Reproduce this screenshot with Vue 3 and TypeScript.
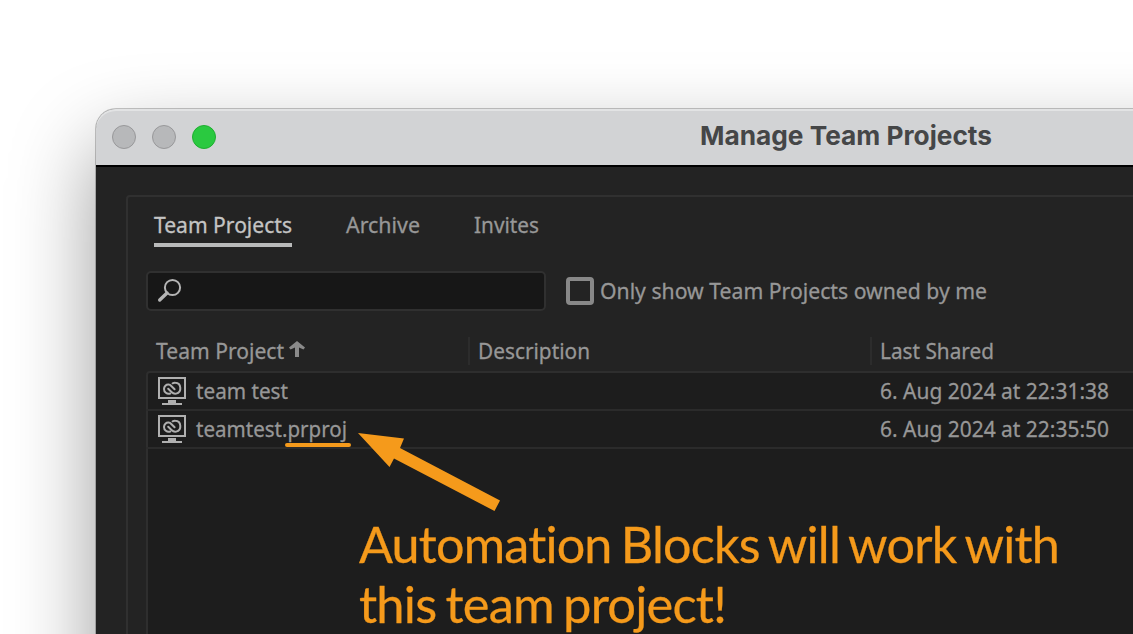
<script setup lang="ts">
import type { Directive } from 'vue'

interface Project {
  stem: string
  suffix: string
  width: number
  shared: string
}

const tabs = [
  { label: 'Team Projects', width: 138, active: true },
  { label: 'Archive', width: 74, active: false },
  { label: 'Invites', width: 65, active: false },
]

const projects: Project[] = [
  { stem: 'team test', suffix: '', width: 92, shared: '6. Aug 2024 at 22:31:38' },
  { stem: 'teamtest', suffix: '.prproj', width: 151, shared: '6. Aug 2024 at 22:35:50' },
]

// Condenses a label horizontally so that it fills the given width.
const vFit: Directive<HTMLElement, number> = {
  mounted(el, binding) {
    el.style.width = 'max-content'
    const natural = el.getBoundingClientRect().width
    el.style.transform = `scaleX(${binding.value / natural})`
    el.style.width = `${natural}px`
    el.style.marginRight = `${binding.value - natural}px`
  },
}
</script>

<template>
  <main class="stage">
    <section class="window">
      <header class="titlebar">
        <i class="light"></i><i class="light"></i><i class="light green"></i>
        <h1 v-fit="292" class="fit">Manage Team Projects</h1>
      </header>
      <div class="body">
        <div class="panel">
          <nav class="tabs">
            <a v-for="t in tabs" :key="t.label" class="tab" :class="{ active: t.active }">
              <span v-fit="t.width" class="fit">{{ t.label }}</span>
            </a>
          </nav>
          <div class="filters">
            <div class="search">
              <svg width="26" height="26" viewBox="0 0 26 26" fill="none" stroke="#b4b4b4">
                <circle cx="15.500" cy="9.500" r="7.600" stroke-width="2" />
                <path d="M10 15 L2.700 22" stroke-width="3.400" stroke-linecap="round" />
              </svg>
            </div>
            <i class="check"></i>
            <span v-fit="387" class="fit">Only show Team Projects owned by me</span>
          </div>
          <div class="columns head">
            <div class="cell first">
              <span v-fit="128" class="fit">Team Project</span>
              <svg class="sort" width="18" height="18" viewBox="0 0 18 18">
                <path d="M9 1 L17 7.500 L15.500 9.500 L11 7.500 V17 H7 V7.500 L2.500 9.500 L1 7.500 Z" fill="#8a8a8a" />
              </svg>
            </div>
            <div class="cell"><span v-fit="112" class="fit">Description</span></div>
            <div class="cell"><span v-fit="114" class="fit">Last Shared</span></div>
          </div>
          <div class="list">
            <div v-for="p in projects" :key="p.stem" class="columns row">
              <div class="cell first">
                <svg class="monitor" width="28" height="28" viewBox="0 0 28 28">
                  <path d="M1 1H27V21H1Z" fill="none" stroke="#b0b0b0" stroke-width="2" />
                  <path d="M10 23H18V26H24V28H4V26H10Z" fill="#b0b0b0" />
                  <g fill="none" stroke="#b0b0b0" stroke-width="2" stroke-linecap="round">
                    <path d="M12.300 16.500C8.800 17.600 6 15 6 12C6 9.300 8.200 7.400 10.500 7.600C11.800 7.700 12.600 8.200 13.300 9L16.600 12.300" />
                    <path d="M10.200 11.800L13.500 15C15 16.500 16.500 17 18.200 16.600C24.300 15.200 23.300 6 17.300 5.800C16.300 5.700 15.200 6 14.600 6.300" />
                  </g>
                </svg>
                <span v-fit="p.width" class="fit name">{{ p.stem }}{{ p.suffix }}</span>
                <i v-if="p.suffix" class="mark"></i>
              </div>
              <div class="cell"></div>
              <div class="cell"><span v-fit="229" class="fit">{{ p.shared }}</span></div>
            </div>
          </div>
        </div>
      </div>
    </section>
    <svg class="arrow" width="144" height="80" viewBox="0 0 144 80">
      <path d="M0 1L46 6.500L42 16L142 68.500L136.500 79L36 26.500L31.500 35Z" fill="#f59a1b" />
    </svg>
    <div class="note">
      <div v-fit="700" class="fit">Automation Blocks will work with</div>
      <div v-fit="367" class="fit">this team project!</div>
    </div>
  </main>
</template>

<style>
body {
  background: #fff;
  overflow: hidden;
}
</style>

<style scoped>
.stage {
  position: relative;
  box-sizing: border-box;
  width: 1133px;
  height: 634px;
  padding: 109px 0 0 96px;
  overflow: hidden;
  background: #fff;
  font-family: 'Noto Sans', sans-serif;
  font-size: 22.5px;
  color: #979797;
  -webkit-text-stroke: 0.3px currentColor;
}
.fit {
  display: block;
  transform-origin: 0 50%;
  white-space: pre;
  flex: none;
}
.window {
  width: 1508px;
  height: 1000px;
  border-radius: 20px;
  background: #232323;
  box-shadow: 0 0 0 1px rgba(0, 0, 0, 0.22), 0 36px 84px rgba(0, 0, 0, 0.4);
}
.titlebar {
  display: flex;
  align-items: center;
  box-sizing: border-box;
  height: 58px;
  padding: 0 0 0 16px;
  gap: 16px;
  border-radius: 20px 20px 0 0;
  border-bottom: 2px solid #000;
  background: #d2d3d5;
  box-shadow: inset 0 2px 0 #e2e3e4;
}
.light {
  box-sizing: border-box;
  width: 24px;
  height: 24px;
  border-radius: 50%;
  border: 1px solid #98989a;
  background: #b7b8ba;
}
.green {
  border-color: #1fae30;
  background: #2ac940;
}
h1 {
  margin: 0 0 2px 468px;
  font: 700 26px/32px Inter, sans-serif;
  color: #454647;
  -webkit-text-stroke: 0;
}
.body {
  padding: 28px 0 0 30px;
}
.panel {
  box-sizing: border-box;
  width: 1448px;
  height: 900px;
  padding: 16px 0 0 18px;
  border: 2px solid #303030;
  border-radius: 4px;
}
.tabs {
  display: flex;
  gap: 54px;
  padding-left: 8px;
  line-height: 24px;
}
.tab {
  height: 34px;
}
.active {
  color: #c4c4c4;
  border-bottom: 4px solid #b9baba;
  height: 30px;
}
.filters {
  display: flex;
  align-items: center;
  height: 40px;
  margin-top: 24px;
  line-height: 30px;
}
.search {
  box-sizing: border-box;
  width: 400px;
  height: 40px;
  padding: 5px 9px;
  border: 2px solid #303030;
  border-radius: 5px;
  background: #171717;
}
.check {
  box-sizing: border-box;
  width: 28px;
  height: 28px;
  margin: 0 6px 0 20px;
  border: 4px solid #888;
  border-radius: 4px;
}
.columns {
  display: grid;
  grid-template-columns: 322px 402px 600px;
}
.head {
  height: 28px;
  margin: 26px 0 6px;
  line-height: 28px;
}
.cell {
  display: flex;
  align-items: center;
  box-sizing: border-box;
  padding-left: 10px;
}
.head .cell {
  padding-left: 8px;
  border-left: 2px solid #2c2c2c;
}
.head .first {
  border-color: transparent;
}
.sort {
  margin: -4px 0 0 4px;
}
.list {
  box-sizing: border-box;
  height: 800px;
  border: 2px solid #2e2e2e;
  border-radius: 4px;
  background: #1d1d1d;
}
.row {
  height: 36px;
  margin-left: -2px;
  border-bottom: 2px solid #2b2b2b;
  line-height: 34px;
}
.row .cell {
  position: relative;
}
.row .first {
  padding-left: 12px;
}
.name {
  margin-left: 10px;
}
.mark {
  position: absolute;
  left: 139px;
  top: 32px;
  width: 66px;
  height: 4px;
  border-radius: 2px;
  background: #f59a1b;
}
.arrow {
  position: absolute;
  left: 358px;
  top: 432px;
}
.note {
  position: absolute;
  left: 359px;
  top: 514px;
  font: 400 51px/60px Lato, sans-serif;
  font-variant-ligatures: none;
  letter-spacing: -0.8px;
  word-spacing: -3px;
  color: #f59a1b;
  -webkit-text-stroke: 0.3px currentColor;
}
</style>
